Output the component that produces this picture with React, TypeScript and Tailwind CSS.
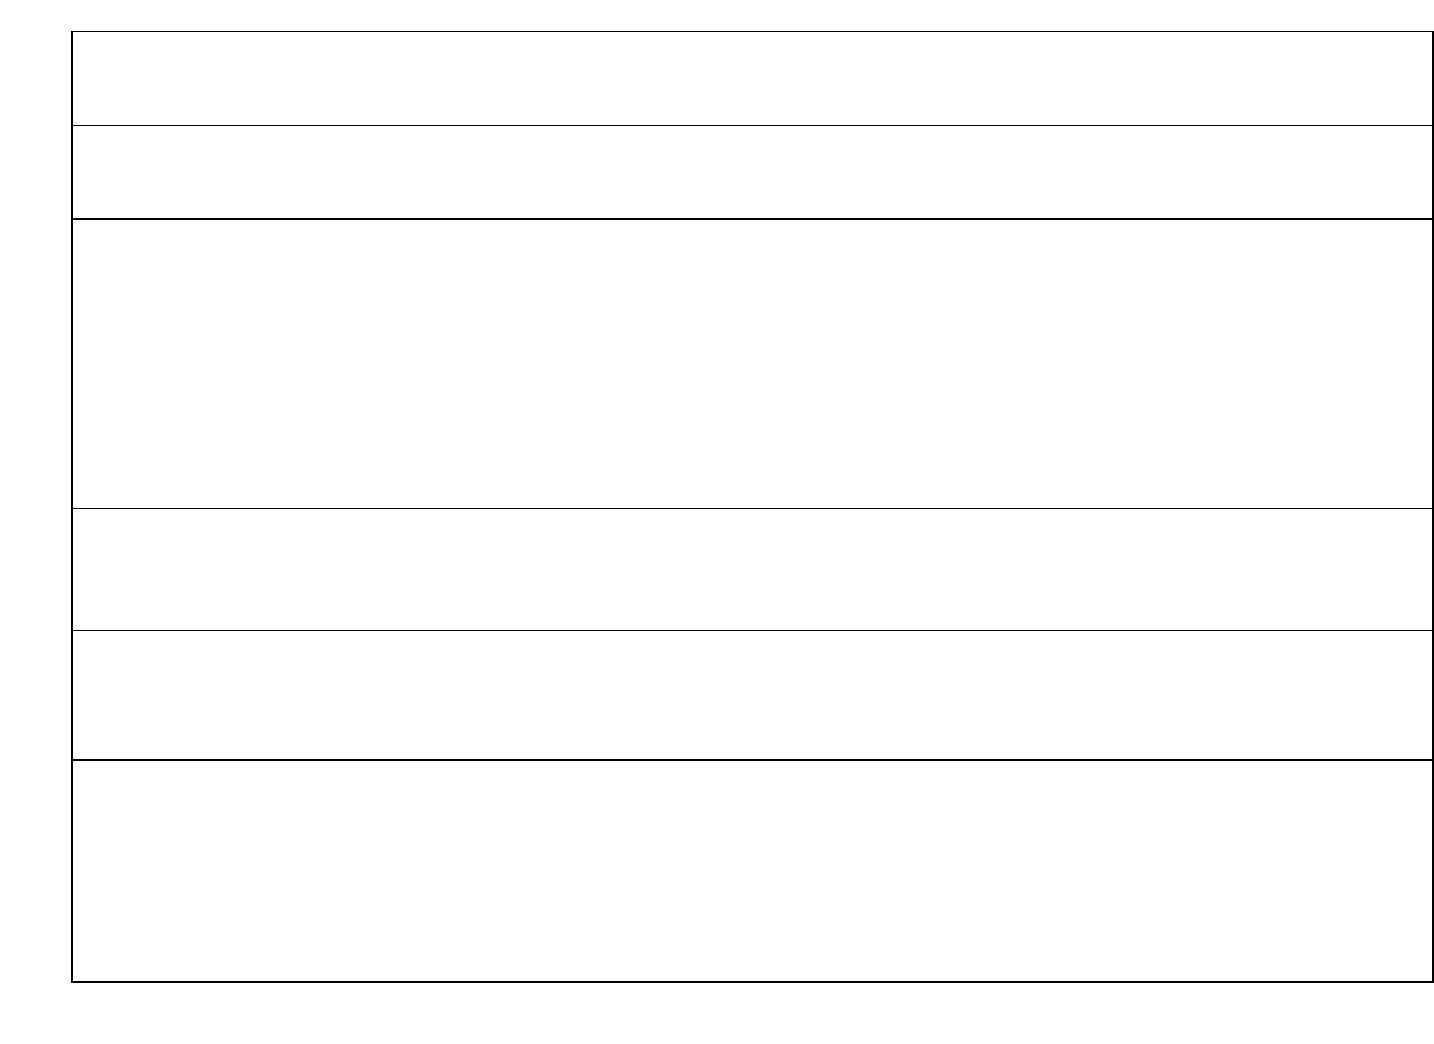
export default function App() {
  return (
    <div className="min-h-screen bg-white pt-[31px] pl-[71px]">
      <div className="w-[1363px] border-t border-x-2 border-black flex flex-col">
        <div className="h-[94px] border-b border-black" />
        <div className="h-[94px] border-b-2 border-black" />
        <div className="h-[289px] border-b border-black" />
        <div className="h-[122px] border-b border-black" />
        <div className="h-[130px] border-b-2 border-black" />
        <div className="h-[222px] border-b-2 border-black" />
      </div>
    </div>
  );
}
